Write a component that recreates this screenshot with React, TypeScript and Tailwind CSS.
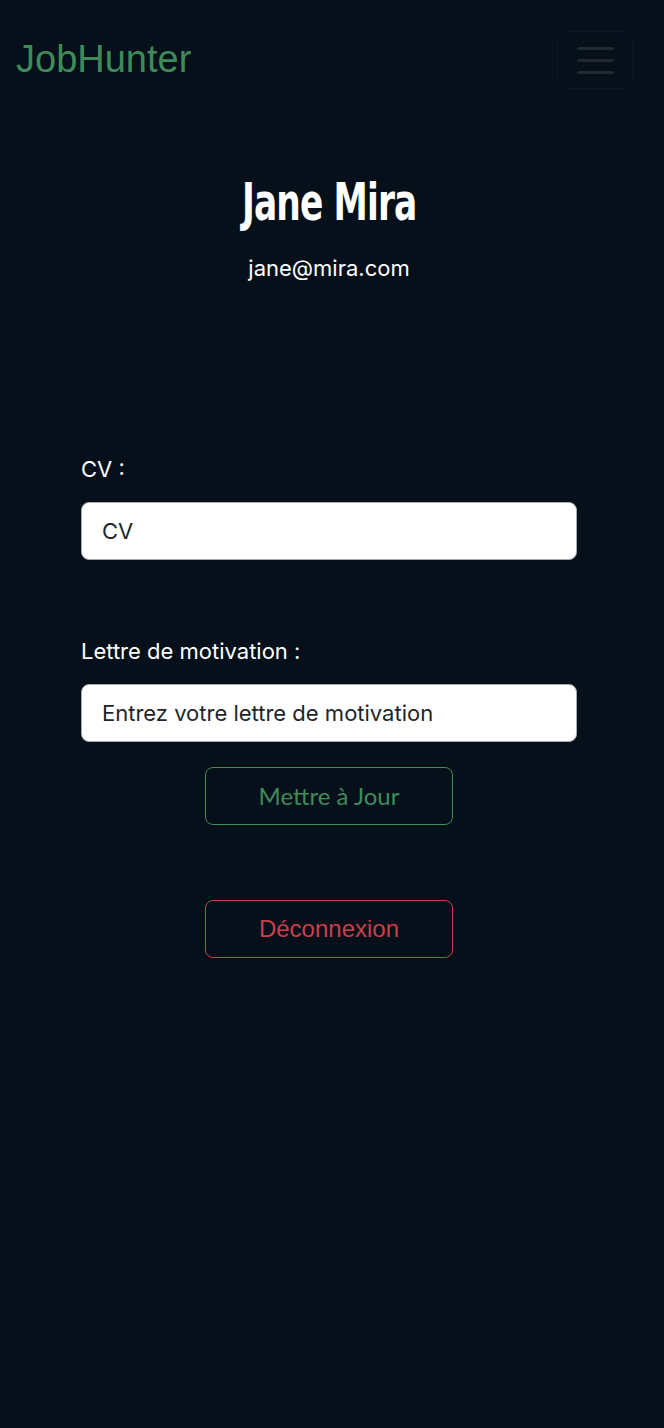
import React from 'react'

const sans = "font-['Liberation_Sans',Arial,sans-serif]"

function Header() {
  return (
    <div className="flex items-center justify-between h-[120px] pl-4 pr-[31px]">
      <div className={`${sans} text-[38px] leading-none text-[#3f8a59] -mt-[2px]`}>JobHunter</div>
      <button className="w-[76px] h-[58px] rounded-[8px] border border-[#0b1620] flex items-center justify-center">
        <span className="flex flex-col gap-[9px] w-[37px]">
          <span className="h-[3px] bg-[#22282d] rounded-full" />
          <span className="h-[3px] bg-[#22282d] rounded-full" />
          <span className="h-[3px] bg-[#22282d] rounded-full" />
        </span>
      </button>
    </div>
  )
}

function Field({ label, value, className }: { label: string; value: string; className?: string }) {
  return (
    <div className={className}>
      <div className="font-['Inter',sans-serif] text-[22px] leading-none text-white mb-[22px]">{label}</div>
      <div className="h-[58px] rounded-[8px] border border-[#a7abb0] bg-white flex items-center px-5">
        <span className="font-['Inter',sans-serif] text-[22px] text-[#212529]">{value}</span>
      </div>
    </div>
  )
}

export default function App() {
  return (
    <div className="min-h-[1428px] bg-[#05101a]">
      <Header />
      <div className="flex flex-col items-center pr-[6px]">
        <h1 className="font-['DejaVu_Sans_Condensed',sans-serif] font-bold text-[44px] leading-none text-white mt-[60px] scale-y-[1.18] scale-x-[0.87] tracking-[-1px]">
          Jane Mira
        </h1>
        <div className="font-['Inter',sans-serif] text-[22px] leading-none text-white mt-[33px]">jane@mira.com</div>
      </div>
      <div className="w-[496px] ml-[81px] mt-[179px]">
        <Field label="CV :" value="CV" />
        <Field label="Lettre de motivation :" value="Entrez votre lettre de motivation" className="mt-[80px]" />
        <div className="flex flex-col items-center mt-[25px]">
          <button className="w-[248px] h-[58px] rounded-[8px] border-[1.5px] border-[#3f8a59] text-[#3f8a59] font-['Lato',sans-serif] text-[24px]">
            Mettre à Jour
          </button>
          <button className={`w-[248px] h-[58px] rounded-[8px] border-[1.5px] border-[#c8404a] text-[#c8404a] ${sans} text-[24px] mt-[75px]`}>
            Déconnexion
          </button>
        </div>
      </div>
    </div>
  )
}
